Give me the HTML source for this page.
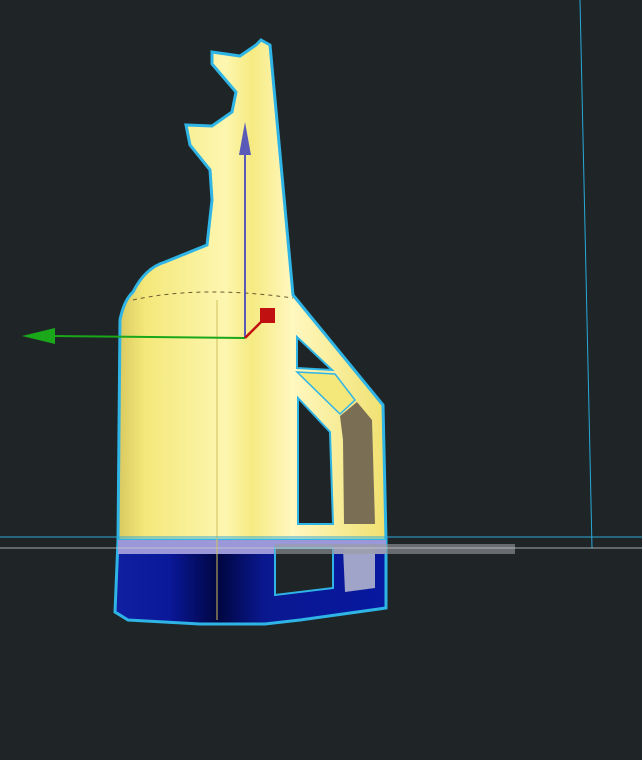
<!DOCTYPE html>
<html><head><style>
html,body{margin:0;padding:0;background:#1f2426;width:642px;height:760px;overflow:hidden}
</style></head><body>
<svg width="642" height="760" viewBox="0 0 642 760" xmlns="http://www.w3.org/2000/svg">
<defs>
<linearGradient id="y" x1="0" x2="1" y1="0" y2="0">
<stop offset="0" stop-color="#d8c860"/><stop offset="0.1" stop-color="#f4e87a"/>
<stop offset="0.4" stop-color="#fdf6b0"/><stop offset="0.5" stop-color="#f6ea82"/>
<stop offset="0.65" stop-color="#fff8c0"/><stop offset="1" stop-color="#f0e070"/></linearGradient>
<linearGradient id="b" x1="0" x2="1" y1="0" y2="0">
<stop offset="0" stop-color="#1020a0"/><stop offset="0.2" stop-color="#0a189a"/>
<stop offset="0.38" stop-color="#000640"/><stop offset="0.55" stop-color="#0a1890"/>
<stop offset="1" stop-color="#0818a0"/></linearGradient>
</defs>
<line x1="580" y1="0" x2="592" y2="548" stroke="#29a8d8" stroke-width="1"/>
<path d="M261,40 L270,45 L293,295 L383,405 L386,540 L118,540 L120,320 Q124,300 133,292 Q145,268 165,262 L207,245 L212,200 L210,170 L190,145 L186,125 L212,126 L232,112 L236,92 L212,64 L212,52 L240,56 L256,45 Z" fill="url(#y)" stroke="#2fb4e6" stroke-width="3"/>
<path d="M118,540 L386,540 L386,608 L300,620 L265,624 L200,624 L128,620 L115,612 Z" fill="url(#b)" stroke="#2fb4e6" stroke-width="3"/>
<rect x="118" y="540" width="268" height="14" fill="#9a98d8"/>
<line x1="217" y1="300" x2="217" y2="620" stroke="#d0c060" stroke-width="1"/>
<path d="M133,300 Q200,285 293,298" fill="none" stroke="#6a5a30" stroke-width="1" stroke-dasharray="4,4"/>
<path d="M297,337 L332,370 L297,368 Z" fill="#1f2426" stroke="#2fb4e6" stroke-width="2"/>
<path d="M297,372 L335,374 L355,400 L340,414 Z" fill="#f4e87a" stroke="#2fb4e6" stroke-width="1.5"/>
<path d="M298,398 L330,432 L333,524 L298,524 Z" fill="#1f2426" stroke="#2fb4e6" stroke-width="2"/>
<path d="M340,416 L357,402 L372,420 L375,524 L344,524 L343,440 Z" fill="#7a6f55"/>
<path d="M275,548 L333,548 L333,588 L275,595 Z" fill="#1f2426" stroke="#2fb4e6" stroke-width="2"/>
<path d="M343,548 L375,548 L375,588 L345,592 Z" fill="#a0a4c8"/>
<rect x="275" y="544" width="240" height="10" fill="#9a9ca0" opacity="0.6"/>
<line x1="0" y1="537" x2="642" y2="537" stroke="#2fa8d8" stroke-width="1"/>
<line x1="0" y1="548" x2="642" y2="548" stroke="#c8ccd0" stroke-width="1" opacity="0.8"/>
<line x1="245" y1="338" x2="245" y2="150" stroke="#5a5ab8" stroke-width="2"/>
<path d="M245,122 L239,155 L251,155 Z" fill="#5a5ab8"/>
<line x1="245" y1="338" x2="50" y2="336" stroke="#1aa81a" stroke-width="2"/>
<path d="M22,336 L55,328 L55,344 Z" fill="#1aa81a"/>
<line x1="245" y1="338" x2="265" y2="318" stroke="#c01010" stroke-width="2.5"/>
<rect x="260" y="308" width="15" height="15" fill="#c01010"/>
</svg>
</body></html>
